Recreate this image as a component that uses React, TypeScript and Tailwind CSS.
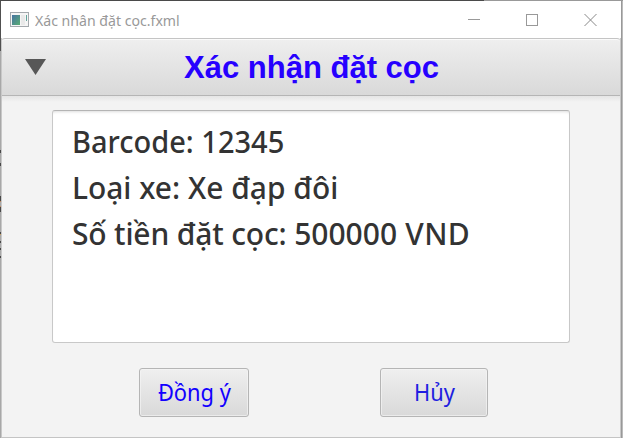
import React from "react";

const frameMarks = [
  { top: 150, h: 3, c: "#484848" },
  { top: 163, h: 3, c: "#484848" },
  { top: 196, h: 5, c: "#484848" },
  { top: 201, h: 1, c: "#c08a60" },
  { top: 206, h: 1, c: "#c08a60" },
  { top: 207, h: 5, c: "#484848" },
  { top: 232, h: 2, c: "#484848" },
  { top: 234, h: 1, c: "#c9a060" },
  { top: 241, h: 2, c: "#484848" },
  { top: 248, h: 2, c: "#484848" },
  { top: 256, h: 2, c: "#484848" },
];

function TitleBar() {
  return (
    <div className="flex h-[37px] items-center bg-white pl-[9px]">
      <svg width="19" height="15" viewBox="0 0 19 15" className="shrink-0" shapeRendering="crispEdges">
        <defs>
          <linearGradient id="screen" x1="0" y1="0" x2="1" y2="1">
            <stop offset="0" stopColor="#4773a2" />
            <stop offset="1" stopColor="#58ad73" />
          </linearGradient>
        </defs>
        <rect x="0.5" y="0.5" width="18" height="14" fill="#f5f5f5" stroke="#a4a9ad" />
        <rect x="2" y="3" width="8" height="10" fill="url(#screen)" />
        <rect x="11" y="3" width="4" height="10" fill="#e9e9e9" />
        <rect x="16" y="3" width="1" height="6" fill="#62a49b" />
      </svg>
      <span className="ml-[6px] inline-block origin-left scale-x-[0.94] whitespace-nowrap font-['Noto_Sans',sans-serif] text-[15px] leading-5 text-[#999]">
        Xác nhân đặt cọc.fxml
      </span>
      <div className="ml-auto flex items-center gap-[46px] pr-[24px]">
        <svg width="12" height="12" shapeRendering="crispEdges"><path d="M0 5.5H12" stroke="#999" /></svg>
        <svg width="12" height="12" shapeRendering="crispEdges"><rect x=".5" y=".5" width="11" height="11" fill="none" stroke="#999" /></svg>
        <svg width="13" height="12"><path d="M.5 0L12.5 12M12.5 0L.5 12" stroke="#888" /></svg>
      </div>
    </div>
  );
}

export default function App() {
  return (
    <div className="relative flex h-[438px] w-[623px] flex-col overflow-hidden bg-[#f3f3f3]">
      <div className="flex h-px shrink-0">
        <div className="w-[484px] bg-[#4a4a4a]" />
        <div className="flex-1 bg-[#999]" />
      </div>
      <div className="flex flex-1">
        <div className="relative w-px bg-[#a8a8a8]">
          <div className="h-[50px] bg-[#505050]" />
          {frameMarks.map((m) => (
            <div key={m.top} className="absolute left-0 w-px" style={{ top: m.top - 1, height: m.h, background: m.c }} />
          ))}
        </div>
        <div className="flex w-[620px] flex-col border-b border-[#c4c4c4]">
          <TitleBar />
          <div className="flex flex-1 flex-col border-x border-[#c8c8c8]">
            <div className="relative flex h-[58px] items-center justify-center rounded-t-[3px] border-t border-b border-t-[#c4c4c4] border-b-[#b5b5b5] bg-linear-to-b from-[#efefef] to-[#d9d9d9] shadow-[inset_0_1px_0_#fbfbfb]">
              <svg width="22" height="16" className="absolute left-[23px] top-[20px]">
                <path d="M0 0H21L10.5 16Z" fill="#575757" />
              </svg>
              <h1 className="inline-block whitespace-nowrap pl-px pt-[2px] font-['Liberation_Sans',Arial,sans-serif] text-[31px] font-bold leading-9 text-[#2600ff]">
                Xác nhận đặt cọc
              </h1>
            </div>
            <div className="h-[6px] bg-linear-to-b from-[#e5e5e5] to-[#f3f3f3]" />
            <div className="ml-[50px] mt-[8px] h-[233px] w-[518px] rounded-[3px] border border-[#c8c8c8] border-t-[#b4b4b4] bg-white pl-[19px] pt-[8px] font-['Noto_Sans',sans-serif] text-[30px] font-medium leading-[46px] text-[#333] shadow-[inset_0_3px_3px_-2px_#ddd]">
              <div className="w-max origin-left scale-x-[0.967]">Barcode: 12345</div>
              <div className="w-max origin-left scale-x-[0.997]">Loại xe: Xe đạp đôi</div>
              <div className="w-max"><span className="tracking-[-0.17px]">Số tiền đặt cọc: </span>500000<span className="tracking-[0.4px]"> VND</span></div>
            </div>
            <div className="mt-[25px] flex pl-[137px] font-['Noto_Sans',sans-serif] text-[23px]">
              <button className="flex h-[49px] w-[110px] items-center justify-center rounded-[3px] border border-[#b5b5b5] bg-linear-to-b from-[#efefef] to-[#d9d9d9] text-[#1200ff] shadow-[inset_0_0_0_1px_#f4f4f4aa]">
                <span className="inline-block scale-x-[0.95] whitespace-nowrap">Đồng ý</span>
              </button>
              <button className="ml-[131px] flex h-[49px] w-[108px] items-center justify-center rounded-[3px] border border-[#b5b5b5] bg-linear-to-b from-[#efefef] to-[#d9d9d9] text-[#201de0] shadow-[inset_0_0_0_1px_#f4f4f4aa]">
                <span className="inline-block scale-x-[0.95] whitespace-nowrap">Hủy</span>
              </button>
            </div>
          </div>
        </div>
        <div className="w-px bg-[#999]" />
        <div className="w-px bg-[#bbb]" />
      </div>
    </div>
  );
}
